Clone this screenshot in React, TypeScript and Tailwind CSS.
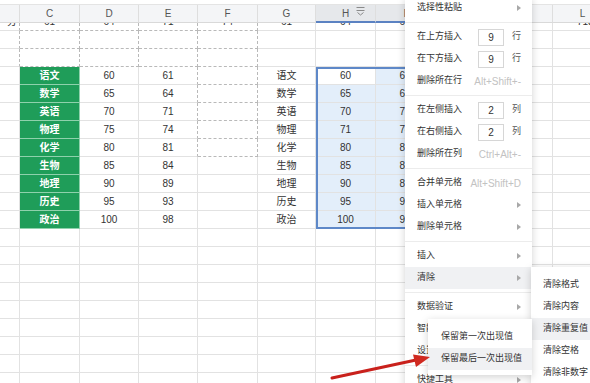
import React from 'react';

type Col = { k: string; w: string };
const COLS: Col[] = [
  { k: '', w: 'w-[20px]' },
  { k: 'C', w: 'w-[60px]' },
  { k: 'D', w: 'w-[59px]' },
  { k: 'E', w: 'w-[59px]' },
  { k: 'F', w: 'w-[60px]' },
  { k: 'G', w: 'w-[58px]' },
  { k: 'H', w: 'w-[60px]' },
  { k: 'I', w: 'w-[59px]' },
  { k: 'J', w: 'w-[59px]' },
  { k: 'K', w: 'w-[59px]' },
  { k: 'L', w: 'w-[60px]' },
];

const SUBJ = ['语文', '数学', '英语', '物理', '化学', '生物', '地理', '历史', '政治'];
const D = ['60', '65', '70', '75', '80', '85', '90', '95', '100'];
const E = ['61', '64', '71', '74', '81', '84', '89', '93', '98'];
const H = ['60', '65', '70', '71', '80', '85', '90', '95', '100'];

type CellSpec = { t?: string; c?: string };

function buildRows(): CellSpec[][] {
  const rows: CellSpec[][] = [];
  const dr = '[border-right-style:dashed] border-r-[#b9b9b9]';
  const db = '[border-bottom-style:dashed] border-b-[#b9b9b9]';
  // partial row
  rows.push([
    { t: '分', c: `justify-end pr-[2px] ${dr}` },
    { t: '61', c: `${dr} ${db}` },
    { t: '64', c: `${dr} ${db}` },
    { t: '71', c: `${dr} ${db}` },
    { t: '74', c: `${dr} ${db}` },
    { t: '61' },
    { t: '64', c: 'bg-white' },
    { t: '61' },
    {},
    {},
    { t: '713', c: 'justify-start pl-[24px]' },
  ]);
  for (let i = 0; i < 2; i++) {
    rows.push([
      { c: dr },
      { c: `${dr} ${db}` },
      { c: `${dr} ${db}` },
      { c: `${dr} ${db}` },
      { c: `${dr} ${db}` },
      {},
      {},
      {},
      {},
      {},
      {},
    ]);
  }
  SUBJ.forEach((s, i) => {
    const inF = i < 5;
    rows.push([
      {},
      {
        t: s,
        c: 'bg-[#1f9d59] text-white font-bold border-b-[#8fd1ac] border-r-[#8fd1ac]',
      },
      { t: D[i] },
      { t: E[i], c: inF ? dr : '' },
      { c: inF ? `${dr} ${db}` : '' },
      { t: s },
      { t: H[i], c: i === 0 ? 'bg-white' : 'bg-[#e3eefa]' },
      { t: E[i], c: 'bg-[#e3eefa]' },
      {},
      {},
      {},
    ]);
  });
  for (let i = 0; i < 9; i++) rows.push(COLS.map(() => ({})));
  return rows;
}

function Arrow() {
  return (
    <svg width="4" height="6" viewBox="0 0 4 6" className="shrink-0">
      <polygon points="0,0 4,3 0,6" fill="#a8a8a8" />
    </svg>
  );
}

type MenuItem =
  | { sep: true }
  | { sep?: false; t: string; arrow?: boolean; input?: string; unit?: string; sc?: string; hover?: boolean };

const MENU: MenuItem[] = [
  { t: '选择性粘贴', arrow: true },
  { sep: true },
  { t: '在上方插入', input: '9', unit: '行' },
  { t: '在下方插入', input: '9', unit: '行' },
  { t: '删除所在行', sc: 'Alt+Shift+-' },
  { sep: true },
  { t: '在左侧插入', input: '2', unit: '列' },
  { t: '在右侧插入', input: '2', unit: '列' },
  { t: '删除所在列', sc: 'Ctrl+Alt+-' },
  { sep: true },
  { t: '合并单元格', sc: 'Alt+Shift+D' },
  { t: '插入单元格', arrow: true },
  { t: '删除单元格', arrow: true },
  { sep: true },
  { t: '插入', arrow: true },
  { t: '清除', arrow: true, hover: true },
  { sep: true },
  { t: '数据验证', arrow: true },
  { t: '智能工具箱', arrow: true },
  { t: '设置单元格格式' },
  { sep: true },
  { t: '快捷工具', arrow: true },
];

export default function App() {
  const rows = buildRows();
  return (
    <div className="relative w-[590px] h-[383px] overflow-hidden bg-white text-[#333] [font-family:'Liberation_Sans','Noto_Sans_CJK_SC',sans-serif]">
      <div className="h-[5px] bg-white border-b border-[#e4e4e4]" />
      <div className="relative z-10 flex h-[18px]">
        {COLS.map((c, i) => {
          const sel = c.k === 'H' || c.k === 'I';
          return (
            <div
              key={i}
              className={`${c.w} shrink-0 h-full flex items-center justify-center text-[10px] text-[#555] border-r border-[#dedede] ${
                sel ? 'bg-[#e6e8eb] border-b-2 border-b-[#5b82c2]' : 'bg-[#f4f5f7] border-b border-b-[#d9d9d9]'
              }`}
            >
              {c.k && (
                <span className="relative">
                  {c.k}
                  {c.k === 'H' && (
                    <svg
                      width="9"
                      height="10"
                      viewBox="0 0 9 10"
                      className="absolute left-[14px] top-[0px]"
                    >
                      <line x1="0.5" y1="1.5" x2="8.5" y2="1.5" stroke="#8a8a8a" strokeWidth="1" />
                      <line x1="0.5" y1="4.5" x2="8.5" y2="4.5" stroke="#8a8a8a" strokeWidth="1" />
                      <polyline points="1.5,6.5 4.5,9 7.5,6.5" fill="none" stroke="#8a8a8a" strokeWidth="1" />
                    </svg>
                  )}
                </span>
              )}
            </div>
          );
        })}
      </div>
      <div className="relative z-0 -mt-[10px]">
        {rows.map((r, ri) => (
          <div key={ri} className="flex h-[18px]">
            {COLS.map((c, ci) => {
              const s = r[ci] || {};
              return (
                <div
                  key={ci}
                  className={`${c.w} shrink-0 h-full flex items-center justify-center overflow-hidden whitespace-nowrap text-[10px] border-r border-b border-[#e2e2e2] ${s.c || ''}`}
                >
                  {s.t}
                </div>
              );
            })}
          </div>
        ))}
      </div>

      {/* selection border */}
      <div className="absolute left-[316px] top-[67px] w-[119px] h-[162px] border-2 border-[#5e88c8] pointer-events-none" />

      {/* main context menu */}
      <div className="absolute left-[405px] top-[-3px] w-[127px] bg-white shadow-[0_2px_8px_rgba(0,0,0,0.18)] z-20 text-[9px] text-[#333]">
        {MENU.map((m, i) =>
          m.sep ? (
            <div key={i} className="my-[3px] h-px bg-[#ececec]" />
          ) : (
            <div
              key={i}
              className={`h-[22px] pl-[12px] pr-[11px] flex items-center justify-between whitespace-nowrap ${
                m.hover ? 'bg-[#f0f1f3]' : ''
              }`}
            >
              <span>{m.t}</span>
              {m.arrow && <Arrow />}
              {m.input && (
                <span className="flex items-center gap-[8px]">
                  <span className="w-[26px] h-[17px] border border-[#d6d6d6] flex items-center justify-center text-[10px]">
                    {m.input}
                  </span>
                  <span className="text-[#555]">{m.unit}</span>
                </span>
              )}
              {m.sc && <span className="text-[10px] text-[#c2c2c2]">{m.sc}</span>}
            </div>
          )
        )}
      </div>

      {/* submenu: 清除 */}
      <div className="absolute left-[531px] top-[267px] w-[80px] py-[7px] bg-white shadow-[0_2px_8px_rgba(0,0,0,0.18)] z-30 text-[9px] text-[#333]">
        {['清除格式', '清除内容', '清除重复值', '清除空格', '清除非数字'].map((t, i) => (
          <div key={i} className={`h-[22px] pl-[12px] flex items-center whitespace-nowrap ${i === 2 ? 'bg-[#f0f1f3]' : ''}`}>
            {t}
          </div>
        ))}
      </div>

      {/* submenu: 清除重复值 */}
      <div className="absolute left-[428px] top-[319px] w-[104px] pt-[7px] pb-[5px] bg-white shadow-[0_2px_8px_rgba(0,0,0,0.18)] z-40 text-[9px] text-[#333]">
        {['保留第一次出现值', '保留最后一次出现值'].map((t, i) => (
          <div key={i} className={`h-[22px] pl-[13px] flex items-center whitespace-nowrap ${i === 1 ? 'bg-[#f0f1f3]' : ''}`}>
            {t}
          </div>
        ))}
      </div>

      {/* red arrow annotation */}
      <svg className="absolute left-0 top-0 z-50 pointer-events-none" width="590" height="383" viewBox="0 0 590 383">
        <line x1="332" y1="378" x2="416" y2="360" stroke="#c9211c" strokeWidth="3" strokeLinecap="round" />
        <polygon points="430,357 413,354.5 416,367" fill="#d02a20" />
      </svg>
    </div>
  );
}
